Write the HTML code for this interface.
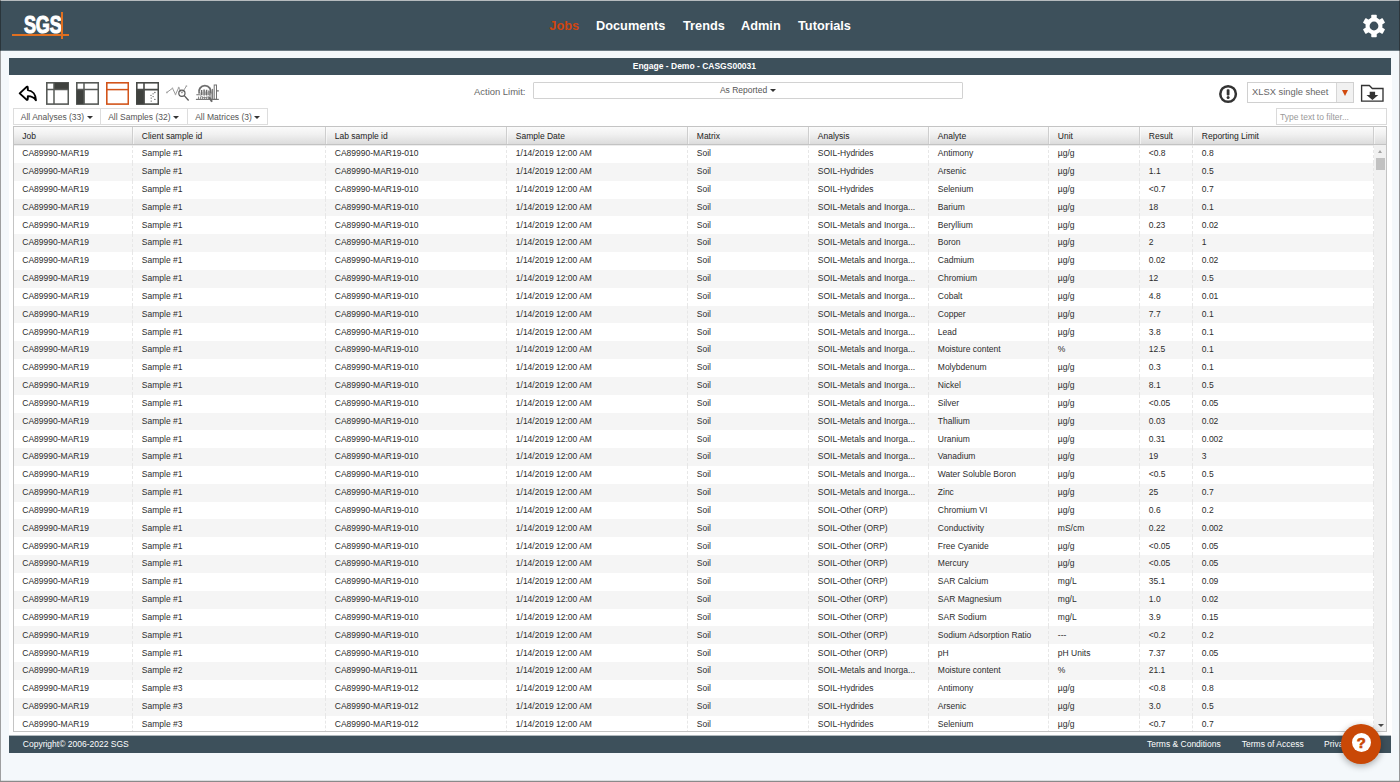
<!DOCTYPE html>
<html lang="en"><head><meta charset="utf-8"><title>Engage - Demo</title>
<style>
*{box-sizing:border-box}
html,body{margin:0;padding:0}
body{width:1400px;height:782px;overflow:hidden;position:relative;background:#f4f8fb;font-family:"Liberation Sans",Arial,sans-serif;font-size:8.5px;color:#333}
.abs{position:absolute}
#hdr{left:0;top:0;width:1400px;height:50px;background:#3d505b;border-top:1px solid #b6bbbe}
#edgeL{left:0;top:0;width:1px;height:782px;background:rgba(10,8,5,.37)}
#edgeR{left:1399px;top:0;width:1px;height:782px;background:rgba(25,20,20,.42)}
#hb{left:0;top:50px;width:1400px;height:1px;background:#6b7a83}
#edgeB{left:0;top:780px;width:1400px;height:2px;background:linear-gradient(rgba(138,138,138,.25) 50%,#8a8a8a 50%)}
#logo{left:23.7px;top:12.1px;color:#fff;font-weight:bold;font-size:24px;line-height:26px;transform:scaleX(.75);transform-origin:0 0;letter-spacing:-.2px;-webkit-text-stroke:1.1px #fff}
#lh{left:12px;top:34.2px;width:57.2px;height:1.5px;background:#df6f20}
#lv{left:61.4px;top:12.3px;width:1.5px;height:26.7px;background:#df6f20}
.nav{top:17.6px;font-weight:bold;font-size:12.75px;line-height:16px;color:#fff;white-space:nowrap}
#title{left:8.5px;top:58px;width:1382.8px;height:16.7px;background:#3d505b;color:#fff;font-weight:bold;font-size:8.5px;line-height:16.5px;text-align:center;padding-right:11px}
#panel{left:8.5px;top:74.7px;width:1383.2px;height:661px;background:#fff}
.ico{top:82px;width:23px;height:23px}
#albl{left:474px;top:85.7px;font-size:9.45px;line-height:12px;color:#666}
#asel{left:533px;top:82px;width:429.5px;height:17px;border:1px solid #d2d2d2;border-radius:1px;background:#fff;text-align:center;font-size:8.5px;line-height:15px;color:#555}
#xsel{left:1247px;top:82px;width:106.5px;height:21px;border:1px solid #d0d0d0;background:#fff;font-size:9.35px;line-height:19.6px;color:#666;padding-left:4px}
#xsel i{position:absolute;left:88px;top:0;width:16.5px;height:19px;background:#f1f1f1;border-left:1px solid #d6d6d6}
#xsel b{position:absolute;left:93.6px;top:7px;width:0;height:0;border-left:3.4px solid transparent;border-right:3.4px solid transparent;border-top:6px solid #d0490c}
#filt{left:1276px;top:108px;width:110.8px;height:17.3px;border:1px solid #dadada;background:#fff;font-size:8.5px;line-height:16px;color:#999;padding-left:3px}
.fb{top:108px;height:17.2px;border:1px solid #dddddd;border-left-width:1px;background:#fff;font-size:8.5px;line-height:16.4px;color:#555;padding-left:6.5px;white-space:nowrap}
.car{display:inline-block;width:0;height:0;border-left:3px solid transparent;border-right:3px solid transparent;border-top:3.3px solid #333;vertical-align:middle;margin-left:2.5px;position:relative;top:-.5px}
#tbl{left:13px;top:126px;width:1374.3px;height:606px;border:1px solid #c4c4c4;background:#fff;overflow:hidden}
#th{position:absolute;left:0;top:0;width:100%;height:18.2px;background:linear-gradient(#fbfbfb,#f0f0f0 45%,#dcdcdc);border-bottom:1px solid #c3c3c3;box-shadow:0 1px 0 rgba(0,0,0,.07)}
#th span{position:absolute;top:0;height:17.2px;line-height:19.6px;padding-left:9.3px;border-right:1px solid #cecece;box-shadow:1px 0 0 rgba(255,255,255,.55);color:#222;white-space:nowrap}
.r{position:absolute;left:0;width:1360px;height:17.84px}
.alt{background:#f5f5f5}
.c{position:absolute;top:0;height:100%;line-height:inherit;padding-left:9.3px;white-space:nowrap;overflow:hidden;border-right:1px dashed #e7e7e7;color:#2c2c2c}
.c0{left:0;width:118.5px;padding-left:8.3px}.c1{left:118.5px;width:193px}.c2{left:311.5px;width:181px}.c3{left:492.5px;width:181px}.c4{left:673.5px;width:121px}
.c5{left:794.5px;width:120px}.c6{left:914.5px;width:120px}.c7{left:1034.5px;width:91px}.c8{left:1125.5px;width:53px}.c9{left:1178.5px;width:181.5px}
#sb{left:1360px;top:18.2px;width:13px;height:587px;background:#f1f1f1;position:absolute}
#thumb{position:absolute;left:2.3px;top:12.4px;width:8.7px;height:12px;background:#c1c1c1}
.sa{position:absolute;left:3.9px;width:0;height:0;border-left:2.8px solid transparent;border-right:2.8px solid transparent}
#ftr{left:8.5px;top:736px;width:1382.6px;height:17px;border-top:0;box-shadow:0 -1px 0 rgba(61,80,91,.4);background:#3d505b;color:#fff;font-size:8.5px;line-height:16.2px}
#ftr span{position:absolute;top:0;white-space:nowrap}
#help{left:1341.3px;top:723.6px;width:40px;height:40px;border-radius:50%;background:#c94806;box-shadow:0 2px 7px rgba(0,0,0,.33)}
#help i{position:absolute;left:10.5px;top:9.7px;width:19px;height:19px;border-radius:50%;background:#fff;color:#c94806;font-style:normal;font-weight:bold;font-size:14.8px;line-height:20.2px;text-align:center;-webkit-text-stroke:.65px #c94806}
</style></head><body>
<div id="hdr" class="abs"></div>
<div id="logo" class="abs">SGS</div><div id="lh" class="abs"></div><div id="lv" class="abs"></div>
<div class="abs nav" style="left:549.3px;color:#cf4510">Jobs</div>
<div class="abs nav" style="left:596px">Documents</div>
<div class="abs nav" style="left:683px">Trends</div>
<div class="abs nav" style="left:741px">Admin</div>
<div class="abs nav" style="left:798px">Tutorials</div>
<svg class="abs" style="left:1362.2px;top:14px" width="24" height="24" viewBox="-12 -12 24 24"><g fill="#fff"><circle r="6.45" fill="none" stroke="#fff" stroke-width="4.1"/><rect x="-2.75" y="-11.3" width="5.5" height="4.6" rx=".7" transform="rotate(0)"/><rect x="-2.75" y="-11.3" width="5.5" height="4.6" rx=".7" transform="rotate(60)"/><rect x="-2.75" y="-11.3" width="5.5" height="4.6" rx=".7" transform="rotate(120)"/><rect x="-2.75" y="-11.3" width="5.5" height="4.6" rx=".7" transform="rotate(180)"/><rect x="-2.75" y="-11.3" width="5.5" height="4.6" rx=".7" transform="rotate(240)"/><rect x="-2.75" y="-11.3" width="5.5" height="4.6" rx=".7" transform="rotate(300)"/></g></svg>
<div id="title" class="abs">Engage - Demo - CASGS00031</div>
<div id="panel" class="abs"></div>
<svg class="abs" style="left:14px;top:78px" width="30" height="30" viewBox="0 0 30 30"><path d="M5.7 15.4L12.6 8.9Q13.6 8.2 13.7 9.5L13.9 12.1C18.6 12.7 21.9 16.6 21.9 22.2C20.1 19.4 17.6 18.1 13.9 18.1L13.7 21.1Q13.5 22.3 12.5 21.6Z" fill="none" stroke="#000" stroke-width="1.95" stroke-linejoin="round"/></svg>
<svg class="abs" style="left:46px;top:82px" width="23.2" height="23" viewBox="0 0 23.2 23"><rect x=".8" y=".8" width="21.5" height="21.3" fill="#fff" stroke="#575a57" stroke-width="1.6"/><rect x="8" y=".8" width="14.3" height="7.2" fill="#3f413e"/><path d="M8 .8V22M.8 7.6H22.3" stroke="#575a57" stroke-width="1.5" fill="none"/></svg>
<svg class="abs" style="left:76px;top:82px" width="23.2" height="23" viewBox="0 0 23.2 23"><rect x=".8" y=".8" width="21.5" height="21.3" fill="#fff" stroke="#575a57" stroke-width="1.6"/><rect x=".8" y="7.2" width="7.6" height="15" fill="#3f413e"/><path d="M8 .8V22M.8 7.6H22.3" stroke="#575a57" stroke-width="1.5" fill="none"/></svg>
<svg class="abs" style="left:106px;top:82px" width="23.2" height="23" viewBox="0 0 23.2 23"><rect x=".8" y=".8" width="21.5" height="21.3" fill="#fff" stroke="#d2541a" stroke-width="1.6"/><path d="M.8 7.6H22.3" stroke="#d2541a" stroke-width="1.5" fill="none"/></svg>
<svg class="abs" style="left:136px;top:82px" width="23.2" height="23" viewBox="0 0 23.2 23"><rect x=".8" y=".8" width="21.5" height="21.3" fill="#fff" stroke="#484a47" stroke-width="1.6"/><rect x=".8" y="7.2" width="7.6" height="15" fill="#3f413e"/><path d="M8 .8V22M.8 7.6H22.3" stroke="#484a47" stroke-width="1.6" fill="none"/><g fill="#555"><circle cx="18.9" cy="10.5" r=".65"/><circle cx="17.1" cy="11.8" r=".65"/><circle cx="15" cy="13.3" r=".65"/><circle cx="17.1" cy="14.6" r=".65"/><circle cx="15.2" cy="16.1" r=".65"/><circle cx="18.9" cy="17.4" r=".65"/><circle cx="15.2" cy="19.1" r=".65"/></g></svg>
<svg class="abs" style="left:164px;top:82px" width="27" height="22" viewBox="164 82 27 22"><path d="M166.9 92.4L172.5 88.3L175.5 94.5L178.7 87.6L181.9 93.2L186.4 86.1" fill="none" stroke="#999" stroke-width="1"/><g fill="#aaa"><circle cx="166.9" cy="92.4" r=".9"/><circle cx="172.5" cy="88.3" r=".8"/><circle cx="175.5" cy="94.5" r=".8"/><circle cx="178.7" cy="87.6" r=".9"/><circle cx="186.4" cy="86.1" r=".9"/></g><circle cx="181.9" cy="93.2" r="3.1" fill="none" stroke="#5a5a5a" stroke-width="1.2"/><path d="M184.3 95.6L188.6 100.5" stroke="#5a5a5a" stroke-width="1.3" fill="none"/></svg>
<svg class="abs" style="left:194px;top:82px" width="27" height="22" viewBox="194 82 27 22"><g fill="none" stroke="#777" stroke-width="1"><path d="M195.9 99.4H218.8" stroke-width="1.2"/><path d="M199.2 93.5A6 6 0 1 1 210.6 93.5" stroke-width="1.8" stroke="#6e6e6e"/><path d="M199.2 93.5A6 6 0 0 0 210.6 93.5" stroke-width="1" stroke="#999"/><path d="M209 96.9L212 101.7" stroke-width="2" stroke="#6a6a6a"/><rect x="214.2" y="85" width="2.3" height="14.4" stroke="#707070"/><path d="M212.6 88.9V99.4M211 91.5V99.4" stroke="#707070"/><path d="M201.6 90V95.2M204.1 89.5V95.6M206.6 89.8V95.6M209 90.6V95.2" stroke-width="1.5" stroke="#6c6c6c"/><path d="M200.1 92.5V94.8M202.8 92V95M205.4 91.5V95M207.8 92V95" stroke-width=".8" stroke="#999"/><path d="M198.6 96.6V99.4M200.6 96.6V99.4M202.6 96.6V99.4M204.6 96.6V99.4M206.6 96.6V99.4M208.4 97V99.4" stroke-width="1" stroke="#808080"/><path d="M196.3 94.8H199.2M216.6 90.9H218.8" stroke="#707070" stroke-width="1.1"/></g></svg>

<div id="albl" class="abs">Action Limit:</div>
<div id="asel" class="abs">As Reported<span class="car"></span></div>
<svg class="abs" style="left:1218px;top:83.5px" width="20" height="20" viewBox="0 0 20 20"><circle cx="10.1" cy="10" r="7.8" fill="none" stroke="#333" stroke-width="2.5"/><rect x="8.7" y="5.2" width="2.8" height="6.2" rx=".9" fill="#333"/><circle cx="10.1" cy="13.6" r="1.5" fill="#333"/></svg>
<div id="xsel" class="abs">XLSX single sheet<i></i><b></b></div>
<svg class="abs" style="left:1360px;top:84px" width="25" height="19" viewBox="0 0 25 19"><path d="M1.6 1.5H9.3L12.3 4.5H23V17.1H1.6Z" fill="#fff" stroke="#333" stroke-width="1.35" stroke-linejoin="miter"/><path d="M9.7 7.8h5.4v3.2h3.2l-5.9 4.9-5.9-4.9h3.2z" fill="#333"/></svg>
<div class="abs fb" style="left:13.3px;width:87.4px">All Analyses (33)<span class="car"></span></div>
<div class="abs fb" style="left:99.9px;width:87.9px;padding-left:7.3px">All Samples (32)<span class="car"></span></div>
<div class="abs fb" style="left:186.9px;width:80.9px;padding-left:7.3px">All Matrices (3)<span class="car"></span></div>
<div id="filt" class="abs">Type text to filter...</div>
<div id="tbl" class="abs">
<div id="th"><span style="left:0;width:118.5px;padding-left:8.2px">Job</span><span style="left:118.5px;width:193px">Client sample id</span><span style="left:311.5px;width:181px">Lab sample id</span><span style="left:492.5px;width:181px">Sample Date</span><span style="left:673.5px;width:121px">Matrix</span><span style="left:794.5px;width:120px">Analysis</span><span style="left:914.5px;width:120px">Analyte</span><span style="left:1034.5px;width:91px">Unit</span><span style="left:1125.5px;width:53px">Result</span><span style="left:1178.5px;width:181.5px">Reporting Limit</span></div>
<div id="rows">
<div class="r" style="top:18px;height:18px;line-height:16px"><span class="c c0">CA89990-MAR19</span><span class="c c1">Sample #1</span><span class="c c2">CA89990-MAR19-010</span><span class="c c3">1/14/2019 12:00 AM</span><span class="c c4">Soil</span><span class="c c5">SOIL-Hydrides</span><span class="c c6">Antimony</span><span class="c c7">µg/g</span><span class="c c8">&lt;0.8</span><span class="c c9">0.8</span></div>
<div class="r alt" style="top:36px;height:18px;line-height:16px"><span class="c c0">CA89990-MAR19</span><span class="c c1">Sample #1</span><span class="c c2">CA89990-MAR19-010</span><span class="c c3">1/14/2019 12:00 AM</span><span class="c c4">Soil</span><span class="c c5">SOIL-Hydrides</span><span class="c c6">Arsenic</span><span class="c c7">µg/g</span><span class="c c8">1.1</span><span class="c c9">0.5</span></div>
<div class="r" style="top:54px;height:18px;line-height:16px"><span class="c c0">CA89990-MAR19</span><span class="c c1">Sample #1</span><span class="c c2">CA89990-MAR19-010</span><span class="c c3">1/14/2019 12:00 AM</span><span class="c c4">Soil</span><span class="c c5">SOIL-Hydrides</span><span class="c c6">Selenium</span><span class="c c7">µg/g</span><span class="c c8">&lt;0.7</span><span class="c c9">0.7</span></div>
<div class="r alt" style="top:72px;height:17px;line-height:16px"><span class="c c0">CA89990-MAR19</span><span class="c c1">Sample #1</span><span class="c c2">CA89990-MAR19-010</span><span class="c c3">1/14/2019 12:00 AM</span><span class="c c4">Soil</span><span class="c c5">SOIL-Metals and Inorga...</span><span class="c c6">Barium</span><span class="c c7">µg/g</span><span class="c c8">18</span><span class="c c9">0.1</span></div>
<div class="r" style="top:89px;height:18px;line-height:18px"><span class="c c0">CA89990-MAR19</span><span class="c c1">Sample #1</span><span class="c c2">CA89990-MAR19-010</span><span class="c c3">1/14/2019 12:00 AM</span><span class="c c4">Soil</span><span class="c c5">SOIL-Metals and Inorga...</span><span class="c c6">Beryllium</span><span class="c c7">µg/g</span><span class="c c8">0.23</span><span class="c c9">0.02</span></div>
<div class="r alt" style="top:107px;height:18px;line-height:16px"><span class="c c0">CA89990-MAR19</span><span class="c c1">Sample #1</span><span class="c c2">CA89990-MAR19-010</span><span class="c c3">1/14/2019 12:00 AM</span><span class="c c4">Soil</span><span class="c c5">SOIL-Metals and Inorga...</span><span class="c c6">Boron</span><span class="c c7">µg/g</span><span class="c c8">2</span><span class="c c9">1</span></div>
<div class="r" style="top:125px;height:18px;line-height:16px"><span class="c c0">CA89990-MAR19</span><span class="c c1">Sample #1</span><span class="c c2">CA89990-MAR19-010</span><span class="c c3">1/14/2019 12:00 AM</span><span class="c c4">Soil</span><span class="c c5">SOIL-Metals and Inorga...</span><span class="c c6">Cadmium</span><span class="c c7">µg/g</span><span class="c c8">0.02</span><span class="c c9">0.02</span></div>
<div class="r alt" style="top:143px;height:18px;line-height:16px"><span class="c c0">CA89990-MAR19</span><span class="c c1">Sample #1</span><span class="c c2">CA89990-MAR19-010</span><span class="c c3">1/14/2019 12:00 AM</span><span class="c c4">Soil</span><span class="c c5">SOIL-Metals and Inorga...</span><span class="c c6">Chromium</span><span class="c c7">µg/g</span><span class="c c8">12</span><span class="c c9">0.5</span></div>
<div class="r" style="top:161px;height:18px;line-height:16px"><span class="c c0">CA89990-MAR19</span><span class="c c1">Sample #1</span><span class="c c2">CA89990-MAR19-010</span><span class="c c3">1/14/2019 12:00 AM</span><span class="c c4">Soil</span><span class="c c5">SOIL-Metals and Inorga...</span><span class="c c6">Cobalt</span><span class="c c7">µg/g</span><span class="c c8">4.8</span><span class="c c9">0.01</span></div>
<div class="r alt" style="top:179px;height:17px;line-height:16px"><span class="c c0">CA89990-MAR19</span><span class="c c1">Sample #1</span><span class="c c2">CA89990-MAR19-010</span><span class="c c3">1/14/2019 12:00 AM</span><span class="c c4">Soil</span><span class="c c5">SOIL-Metals and Inorga...</span><span class="c c6">Copper</span><span class="c c7">µg/g</span><span class="c c8">7.7</span><span class="c c9">0.1</span></div>
<div class="r" style="top:196px;height:18px;line-height:18px"><span class="c c0">CA89990-MAR19</span><span class="c c1">Sample #1</span><span class="c c2">CA89990-MAR19-010</span><span class="c c3">1/14/2019 12:00 AM</span><span class="c c4">Soil</span><span class="c c5">SOIL-Metals and Inorga...</span><span class="c c6">Lead</span><span class="c c7">µg/g</span><span class="c c8">3.8</span><span class="c c9">0.1</span></div>
<div class="r alt" style="top:214px;height:18px;line-height:16px"><span class="c c0">CA89990-MAR19</span><span class="c c1">Sample #1</span><span class="c c2">CA89990-MAR19-010</span><span class="c c3">1/14/2019 12:00 AM</span><span class="c c4">Soil</span><span class="c c5">SOIL-Metals and Inorga...</span><span class="c c6">Moisture content</span><span class="c c7">%</span><span class="c c8">12.5</span><span class="c c9">0.1</span></div>
<div class="r" style="top:232px;height:18px;line-height:16px"><span class="c c0">CA89990-MAR19</span><span class="c c1">Sample #1</span><span class="c c2">CA89990-MAR19-010</span><span class="c c3">1/14/2019 12:00 AM</span><span class="c c4">Soil</span><span class="c c5">SOIL-Metals and Inorga...</span><span class="c c6">Molybdenum</span><span class="c c7">µg/g</span><span class="c c8">0.3</span><span class="c c9">0.1</span></div>
<div class="r alt" style="top:250px;height:18px;line-height:16px"><span class="c c0">CA89990-MAR19</span><span class="c c1">Sample #1</span><span class="c c2">CA89990-MAR19-010</span><span class="c c3">1/14/2019 12:00 AM</span><span class="c c4">Soil</span><span class="c c5">SOIL-Metals and Inorga...</span><span class="c c6">Nickel</span><span class="c c7">µg/g</span><span class="c c8">8.1</span><span class="c c9">0.5</span></div>
<div class="r" style="top:268px;height:18px;line-height:16px"><span class="c c0">CA89990-MAR19</span><span class="c c1">Sample #1</span><span class="c c2">CA89990-MAR19-010</span><span class="c c3">1/14/2019 12:00 AM</span><span class="c c4">Soil</span><span class="c c5">SOIL-Metals and Inorga...</span><span class="c c6">Silver</span><span class="c c7">µg/g</span><span class="c c8">&lt;0.05</span><span class="c c9">0.05</span></div>
<div class="r alt" style="top:286px;height:17px;line-height:16px"><span class="c c0">CA89990-MAR19</span><span class="c c1">Sample #1</span><span class="c c2">CA89990-MAR19-010</span><span class="c c3">1/14/2019 12:00 AM</span><span class="c c4">Soil</span><span class="c c5">SOIL-Metals and Inorga...</span><span class="c c6">Thallium</span><span class="c c7">µg/g</span><span class="c c8">0.03</span><span class="c c9">0.02</span></div>
<div class="r" style="top:303px;height:18px;line-height:18px"><span class="c c0">CA89990-MAR19</span><span class="c c1">Sample #1</span><span class="c c2">CA89990-MAR19-010</span><span class="c c3">1/14/2019 12:00 AM</span><span class="c c4">Soil</span><span class="c c5">SOIL-Metals and Inorga...</span><span class="c c6">Uranium</span><span class="c c7">µg/g</span><span class="c c8">0.31</span><span class="c c9">0.002</span></div>
<div class="r alt" style="top:321px;height:18px;line-height:16px"><span class="c c0">CA89990-MAR19</span><span class="c c1">Sample #1</span><span class="c c2">CA89990-MAR19-010</span><span class="c c3">1/14/2019 12:00 AM</span><span class="c c4">Soil</span><span class="c c5">SOIL-Metals and Inorga...</span><span class="c c6">Vanadium</span><span class="c c7">µg/g</span><span class="c c8">19</span><span class="c c9">3</span></div>
<div class="r" style="top:339px;height:18px;line-height:16px"><span class="c c0">CA89990-MAR19</span><span class="c c1">Sample #1</span><span class="c c2">CA89990-MAR19-010</span><span class="c c3">1/14/2019 12:00 AM</span><span class="c c4">Soil</span><span class="c c5">SOIL-Metals and Inorga...</span><span class="c c6">Water Soluble Boron</span><span class="c c7">µg/g</span><span class="c c8">&lt;0.5</span><span class="c c9">0.5</span></div>
<div class="r alt" style="top:357px;height:18px;line-height:16px"><span class="c c0">CA89990-MAR19</span><span class="c c1">Sample #1</span><span class="c c2">CA89990-MAR19-010</span><span class="c c3">1/14/2019 12:00 AM</span><span class="c c4">Soil</span><span class="c c5">SOIL-Metals and Inorga...</span><span class="c c6">Zinc</span><span class="c c7">µg/g</span><span class="c c8">25</span><span class="c c9">0.7</span></div>
<div class="r" style="top:375px;height:17px;line-height:16px"><span class="c c0">CA89990-MAR19</span><span class="c c1">Sample #1</span><span class="c c2">CA89990-MAR19-010</span><span class="c c3">1/14/2019 12:00 AM</span><span class="c c4">Soil</span><span class="c c5">SOIL-Other (ORP)</span><span class="c c6">Chromium VI</span><span class="c c7">µg/g</span><span class="c c8">0.6</span><span class="c c9">0.2</span></div>
<div class="r alt" style="top:392px;height:18px;line-height:18px"><span class="c c0">CA89990-MAR19</span><span class="c c1">Sample #1</span><span class="c c2">CA89990-MAR19-010</span><span class="c c3">1/14/2019 12:00 AM</span><span class="c c4">Soil</span><span class="c c5">SOIL-Other (ORP)</span><span class="c c6">Conductivity</span><span class="c c7">mS/cm</span><span class="c c8">0.22</span><span class="c c9">0.002</span></div>
<div class="r" style="top:410px;height:18px;line-height:18px"><span class="c c0">CA89990-MAR19</span><span class="c c1">Sample #1</span><span class="c c2">CA89990-MAR19-010</span><span class="c c3">1/14/2019 12:00 AM</span><span class="c c4">Soil</span><span class="c c5">SOIL-Other (ORP)</span><span class="c c6">Free Cyanide</span><span class="c c7">µg/g</span><span class="c c8">&lt;0.05</span><span class="c c9">0.05</span></div>
<div class="r alt" style="top:428px;height:18px;line-height:16px"><span class="c c0">CA89990-MAR19</span><span class="c c1">Sample #1</span><span class="c c2">CA89990-MAR19-010</span><span class="c c3">1/14/2019 12:00 AM</span><span class="c c4">Soil</span><span class="c c5">SOIL-Other (ORP)</span><span class="c c6">Mercury</span><span class="c c7">µg/g</span><span class="c c8">&lt;0.05</span><span class="c c9">0.05</span></div>
<div class="r" style="top:446px;height:18px;line-height:16px"><span class="c c0">CA89990-MAR19</span><span class="c c1">Sample #1</span><span class="c c2">CA89990-MAR19-010</span><span class="c c3">1/14/2019 12:00 AM</span><span class="c c4">Soil</span><span class="c c5">SOIL-Other (ORP)</span><span class="c c6">SAR Calcium</span><span class="c c7">mg/L</span><span class="c c8">35.1</span><span class="c c9">0.09</span></div>
<div class="r alt" style="top:464px;height:18px;line-height:16px"><span class="c c0">CA89990-MAR19</span><span class="c c1">Sample #1</span><span class="c c2">CA89990-MAR19-010</span><span class="c c3">1/14/2019 12:00 AM</span><span class="c c4">Soil</span><span class="c c5">SOIL-Other (ORP)</span><span class="c c6">SAR Magnesium</span><span class="c c7">mg/L</span><span class="c c8">1.0</span><span class="c c9">0.02</span></div>
<div class="r" style="top:482px;height:17px;line-height:16px"><span class="c c0">CA89990-MAR19</span><span class="c c1">Sample #1</span><span class="c c2">CA89990-MAR19-010</span><span class="c c3">1/14/2019 12:00 AM</span><span class="c c4">Soil</span><span class="c c5">SOIL-Other (ORP)</span><span class="c c6">SAR Sodium</span><span class="c c7">mg/L</span><span class="c c8">3.9</span><span class="c c9">0.15</span></div>
<div class="r alt" style="top:499px;height:18px;line-height:18px"><span class="c c0">CA89990-MAR19</span><span class="c c1">Sample #1</span><span class="c c2">CA89990-MAR19-010</span><span class="c c3">1/14/2019 12:00 AM</span><span class="c c4">Soil</span><span class="c c5">SOIL-Other (ORP)</span><span class="c c6">Sodium Adsorption Ratio</span><span class="c c7">---</span><span class="c c8">&lt;0.2</span><span class="c c9">0.2</span></div>
<div class="r" style="top:517px;height:18px;line-height:18px"><span class="c c0">CA89990-MAR19</span><span class="c c1">Sample #1</span><span class="c c2">CA89990-MAR19-010</span><span class="c c3">1/14/2019 12:00 AM</span><span class="c c4">Soil</span><span class="c c5">SOIL-Other (ORP)</span><span class="c c6">pH</span><span class="c c7">pH Units</span><span class="c c8">7.37</span><span class="c c9">0.05</span></div>
<div class="r alt" style="top:535px;height:18px;line-height:16px"><span class="c c0">CA89990-MAR19</span><span class="c c1">Sample #2</span><span class="c c2">CA89990-MAR19-011</span><span class="c c3">1/14/2019 12:00 AM</span><span class="c c4">Soil</span><span class="c c5">SOIL-Metals and Inorga...</span><span class="c c6">Moisture content</span><span class="c c7">%</span><span class="c c8">21.1</span><span class="c c9">0.1</span></div>
<div class="r" style="top:553px;height:18px;line-height:16px"><span class="c c0">CA89990-MAR19</span><span class="c c1">Sample #3</span><span class="c c2">CA89990-MAR19-012</span><span class="c c3">1/14/2019 12:00 AM</span><span class="c c4">Soil</span><span class="c c5">SOIL-Hydrides</span><span class="c c6">Antimony</span><span class="c c7">µg/g</span><span class="c c8">&lt;0.8</span><span class="c c9">0.8</span></div>
<div class="r alt" style="top:571px;height:18px;line-height:16px"><span class="c c0">CA89990-MAR19</span><span class="c c1">Sample #3</span><span class="c c2">CA89990-MAR19-012</span><span class="c c3">1/14/2019 12:00 AM</span><span class="c c4">Soil</span><span class="c c5">SOIL-Hydrides</span><span class="c c6">Arsenic</span><span class="c c7">µg/g</span><span class="c c8">3.0</span><span class="c c9">0.5</span></div>
<div class="r" style="top:589px;height:17px;line-height:16px"><span class="c c0">CA89990-MAR19</span><span class="c c1">Sample #3</span><span class="c c2">CA89990-MAR19-012</span><span class="c c3">1/14/2019 12:00 AM</span><span class="c c4">Soil</span><span class="c c5">SOIL-Hydrides</span><span class="c c6">Selenium</span><span class="c c7">µg/g</span><span class="c c8">&lt;0.7</span><span class="c c9">0.7</span></div>
</div>
<div id="sb"><div class="sa" style="top:5px;border-bottom:3px solid #a3a3a3"></div><div id="thumb"></div><div class="sa" style="top:579.2px;left:3.5px;border-left-width:3.2px;border-right-width:3.2px;border-top:3.1px solid #4a4a4a"></div></div>
</div>
<div id="ftr" class="abs"><span style="left:14.3px">Copyright© 2006-2022 SGS</span><span style="left:1138.5px">Terms &amp; Conditions</span><span style="left:1233.3px">Terms of Access</span><span style="left:1315.5px">Privacy Policy</span></div>
<div id="help" class="abs"><i>?</i></div>
<div id="hb" class="abs"></div><div id="edgeL" class="abs"></div><div id="edgeR" class="abs"></div><div id="edgeB" class="abs"></div>
</body></html>
